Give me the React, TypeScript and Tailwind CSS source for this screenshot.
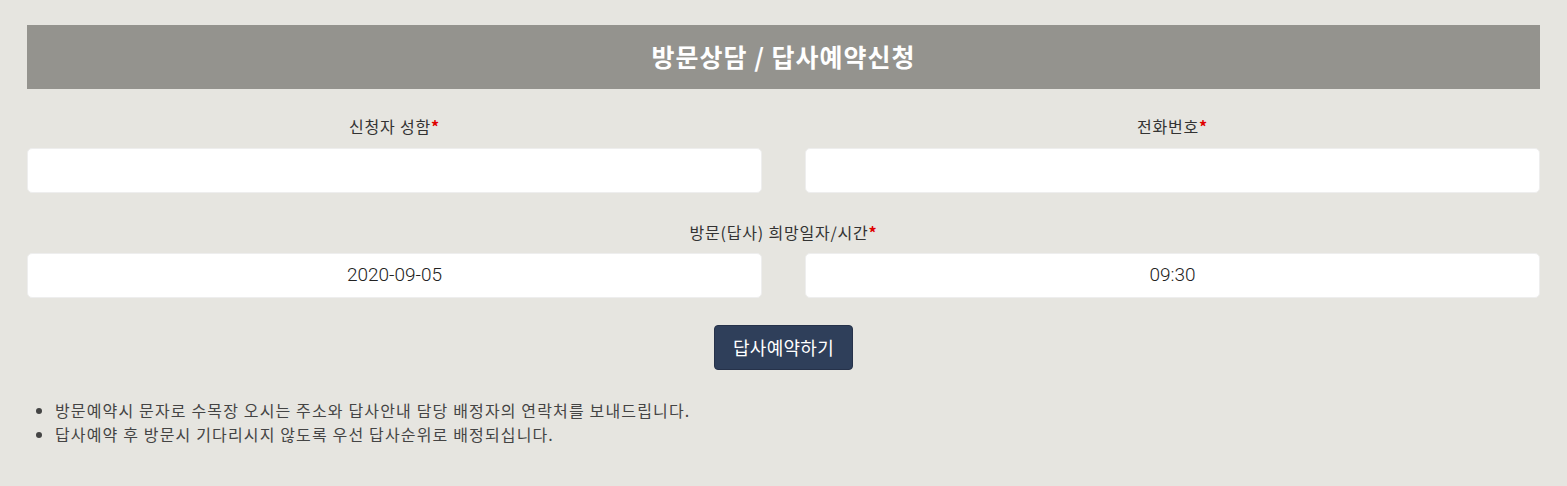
import React from "react";

const font = { fontFamily: '"Noto Sans CJK KR", "Noto Sans", sans-serif' };

const Label = ({ text }: { text: string }) => (
    <div className="text-center text-[16px] leading-[22px] tracking-[0.8px] text-[#333]">
        {text}
        <span className="text-[#e00000] font-bold">*</span>
    </div>
);

const Field = ({ value }: { value?: string }) => (
    <div
        style={{ fontFamily: 'Roboto, "Noto Sans CJK KR", sans-serif' }}
        className="h-[45px] bg-white rounded-[5px] border border-[#eeeeee] flex items-center justify-center text-[19px] font-light text-[#222]"
    >
        {value}
    </div>
);

const App: React.FC = () => {
    return (
        <div style={font} className="w-full min-h-[486px] bg-[#e6e5e0] px-[27px] pt-[25px]">
            <div className="h-[64px] bg-[#94938e] flex items-center justify-center">
                <h1 className="text-white text-[25px] font-bold tracking-[1px]">방문상담 / 답사예약신청</h1>
            </div>

            <div className="grid grid-cols-2 gap-x-[43px] mt-[26px]">
                <div className="flex flex-col gap-[11px]">
                    <Label text="신청자 성함" />
                    <Field />
                </div>
                <div className="flex flex-col gap-[11px]">
                    <Label text="전화번호" />
                    <Field />
                </div>
            </div>

            <div className="mt-[28px]">
                <Label text="방문(답사) 희망일자/시간" />
                <div className="grid grid-cols-2 gap-x-[43px] mt-[10px]">
                    <Field value="2020-09-05" />
                    <Field value="09:30" />
                </div>
            </div>

            <div className="flex justify-center mt-[27px]">
                <button className="w-[139px] h-[45px] bg-[#2f3f5a] rounded-[4px] text-white text-[18px] tracking-[0.3px] border border-[#26324a]">
                    답사예약하기
                </button>
            </div>

            <ul className="list-disc pl-[28px] mt-[28px] text-[16px] leading-[24px] tracking-[1.15px] text-[#444]">
                <li>방문예약시 문자로 수목장 오시는 주소와 답사안내 담당 배정자의 연락처를 보내드립니다.</li>
                <li>답사예약 후 방문시 기다리시지 않도록 우선 답사순위로 배정되십니다.</li>
            </ul>
        </div>
    );
};

export default App;
